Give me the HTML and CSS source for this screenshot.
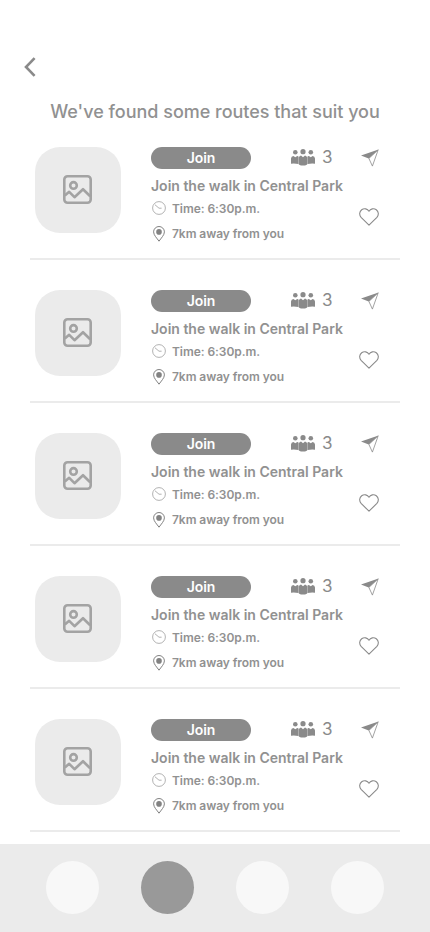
FILE: index.html
```html
<!DOCTYPE html>
<html lang="en">
<head>
<meta charset="utf-8">
<meta name="viewport" content="width=device-width, initial-scale=1">
<title>Routes</title>
<link rel="stylesheet" href="styles.css">
</head>
<body>
<svg class="sprite" aria-hidden="true">
  <symbol id="image" viewBox="0 0 29 29">
    <g fill="none" stroke="currentColor" stroke-width="2.6" stroke-linejoin="round">
      <rect x="1.3" y="1.3" width="26.4" height="26.4" rx="3.2"/>
      <circle cx="10.5" cy="10.4" r="3.3"/>
      <path d="M1.8 20.6L6.2 16.8L11.5 22.2L20 14.2L27.2 21.2"/>
    </g>
  </symbol>
  <symbol id="people" viewBox="0 0 24 17">
    <g fill="currentColor">
      <circle cx="4.3" cy="3.3" r="2.3"/>
      <circle cx="12" cy="2.7" r="2.6"/>
      <circle cx="19.8" cy="3.3" r="2.3"/>
      <path d="M0 14.7V9.6Q.2 7.4 2.4 7L4.3 8.2L6.2 7Q7.2 7.2 7.6 7.8V15Q3 14 0 14.7Z"/>
      <path d="M24 14.7V9.6Q23.8 7.4 21.6 7L19.8 8.2L17.9 7Q16.8 7.2 16.4 7.8V15Q21 14 24 14.7Z"/>
      <path d="M7.8 15.4V8.5Q8.2 7 10 6.6L12 8.3L14 6.6Q15.8 7 16.2 8.5V15.4Q12 17.8 7.8 15.4Z"/>
    </g>
  </symbol>
  <symbol id="send" viewBox="0 0 18 18">
    <path fill="currentColor" d="M17.5 .5L0 6.4L7.7 9.4Z"/>
    <path fill="none" stroke="currentColor" stroke-width=".8" stroke-linejoin="round" d="M17.2 .8L7.9 9.4L11.4 17.1Z"/>
  </symbol>
  <symbol id="heart" viewBox="0 0 20 18">
    <path fill="none" stroke="currentColor" stroke-width="1.1" stroke-linejoin="round" d="M10 17.2L2.1 9.4C-.1 7 .4 3.4 2.7 1.7C5.2 0 8.5 .7 10 3.2C11.5 .7 14.8 0 17.3 1.7C19.6 3.4 20.1 7 17.9 9.4Z"/>
  </symbol>
  <symbol id="clock" viewBox="0 0 14 14">
    <g fill="none" stroke="currentColor" stroke-width=".7">
      <circle cx="7" cy="7" r="6.4"/>
      <path d="M3 3.8L7 7.2H9.6"/>
    </g>
  </symbol>
  <symbol id="pin" viewBox="0 0 12 16">
    <path fill="none" stroke="currentColor" stroke-width="1" d="M6 15.2C4 12.2 .6 9.2 .6 5.9A5.4 5.4 0 0 1 11.4 5.9C11.4 9.2 8 12.2 6 15.2Z"/>
    <circle cx="6" cy="5.9" r="2.8" fill="currentColor"/>
  </symbol>
</svg>

<header class="top">
  <svg class="back" viewBox="0 0 12 20" role="img" aria-label="Back"><path d="M10.6 1.2L2 10L10.6 18.8"/></svg>
  <h1>We've found some routes that suit you</h1>
</header>

<main class="routes"></main>

<nav class="tabs">
  <span class="tab"></span>
  <span class="tab active"></span>
  <span class="tab"></span>
  <span class="tab"></span>
</nav>

<template id="route">
  <article class="route">
    <div class="thumb"><svg><use href="#image"/></svg></div>
    <div class="details">
      <div class="head">
        <button class="join">Join</button>
        <svg class="people"><use href="#people"/></svg>
        <span class="count">3</span>
      </div>
      <h2>Join the walk in Central Park</h2>
      <p class="time"><svg class="clock"><use href="#clock"/></svg>Time: 6:30p.m.</p>
      <p class="place"><svg class="pin"><use href="#pin"/></svg>7km away from you</p>
    </div>
    <div class="actions">
      <svg class="send"><use href="#send"/></svg>
      <svg class="heart"><use href="#heart"/></svg>
    </div>
  </article>
</template>
<script src="app.js"></script>
</body>
</html>
```
FILE: styles.css
```css
* { box-sizing: border-box; margin: 0; padding: 0; }
body {
  height: 932px;
  display: flex;
  flex-direction: column;
  overflow: hidden;
  background: #fff;
  color: #8a8a8a;
  font-family: Inter, "Liberation Sans", sans-serif;
}
svg { display: block; flex: none; }
.sprite { position: absolute; width: 0; height: 0; }
.top { height: 147px; padding-top: 57px; }
.back { width: 12px; height: 20px; margin-left: 24px; fill: none; stroke: #8a8a8a; stroke-width: 2.6; }
h1 {
  margin-top: 24px;
  font-size: 18px;
  line-height: 22px;
  font-weight: 500;
  letter-spacing: -.02px;
  text-align: center;
  white-space: nowrap;
  color: #919191;
}
.routes { display: flex; flex-direction: column; gap: 30px; padding: 0 30px; }
.route { display: flex; height: 113px; padding-left: 5px; border-bottom: 2px solid #ebebeb; }
.thumb {
  width: 86px;
  height: 86px;
  padding: 28px;
  border-radius: 25px;
  background: #ebebeb;
  color: #a3a3a3;
}
.thumb svg { width: 29px; height: 29px; }
.details { width: 207px; margin-left: 30px; }
.head { display: flex; align-items: center; height: 22px; }
.join {
  width: 100px;
  height: 22px;
  margin-right: 40px;
  border: 0;
  border-radius: 11px;
  background: #8a8a8a;
  color: #fff;
  font: 600 14px/22px Inter, "Liberation Sans", sans-serif;
  letter-spacing: -.1px;
}
.people { width: 24px; height: 17px; margin: -1px 7px 0 0; }
.count { font-size: 17px; line-height: 20px; font-weight: 400; margin-bottom: 2px; }
h2 { margin-top: 8px; font-size: 14px; line-height: 18px; font-weight: 600; white-space: nowrap; color: #919191; }
.time, .place { display: flex; align-items: center; font-size: 12px; line-height: 16px; font-weight: 600; letter-spacing: -.06px; color: #919191; }
.time { margin-top: 6px; }
.place { margin-top: 9px; }
.clock { width: 14px; height: 14px; margin: -2px 6px 0 1px; }
.pin { width: 12px; height: 16px; margin: 0 7px 0 2px; color: #828282; }
.actions { width: 21px; }
.send { width: 18px; height: 18px; margin: 2px 0 41px 3px; }
.heart { width: 20px; height: 18px; margin-left: .5px; }
.tabs {
  display: flex;
  gap: 42px;
  height: 88px;
  margin-top: auto;
  padding: 17px 46px 0;
  background: #ebebeb;
}
.tab { width: 53px; height: 53px; border-radius: 50%; background: #f8f8f8; }
.active { background: #999; }
```
FILE: app.js
```js
const list = document.querySelector(".routes");
const template = document.getElementById("route");
for (let i = 0; i < 5; i++) {
  list.append(template.content.cloneNode(true));
}
```
